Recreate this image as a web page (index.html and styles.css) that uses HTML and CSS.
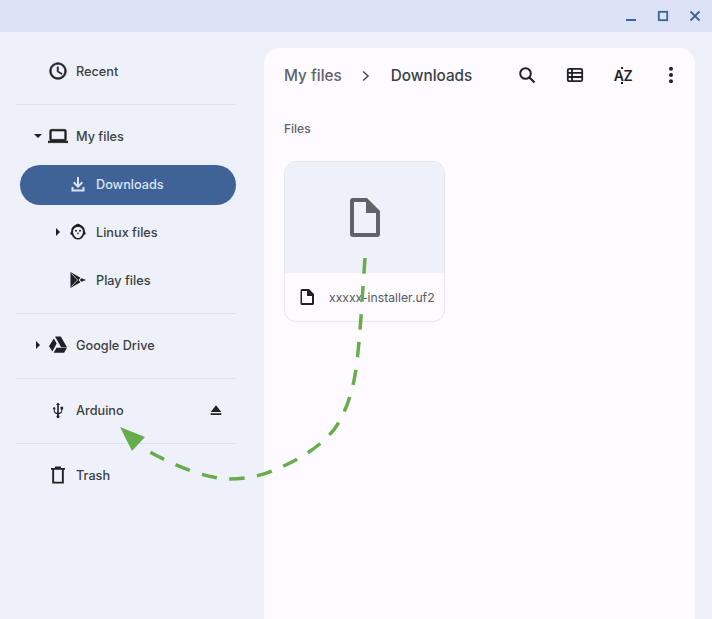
FILE: index.html
```html
<!DOCTYPE html>
<html lang="en">
<head>
  <meta charset="UTF-8" />
  <title>Files - Downloads</title>
  <link rel="stylesheet" href="styles.css">
</head>
<body>

  <div class="titlebar">
    <div class="win-btn"><svg width="16" height="16" viewBox="0 0 16 16"><rect x="3" y="11" width="10" height="2" fill="#3f6397"/></svg></div>
    <div class="win-btn"><svg width="16" height="16" viewBox="0 0 16 16"><rect x="3.800" y="3.800" width="8.400" height="8.400" fill="none" stroke="#3f6397" stroke-width="1.800"/></svg></div>
    <div class="win-btn"><svg width="16" height="16" viewBox="0 0 16 16"><path d="M3.500 3.500l9 9M12.500 3.500l-9 9" stroke="#3f6397" stroke-width="1.800" fill="none"/></svg></div>
  </div>

  <div class="app">
    <div class="sidebar">
      <div class="nav-row">
        <span class="caret-slot"></span>
        <svg class="nav-icon bold" viewBox="0 0 24 24"><path d="M11.990 2C6.470 2 2 6.480 2 12s4.470 10 9.990 10C17.520 22 22 17.520 22 12S17.520 2 11.990 2zM12 20c-4.420 0-8-3.580-8-8s3.580-8 8-8 8 3.580 8 8-3.580 8-8 8zm.5-13H11v6l5.250 3.150.75-1.230-4.500-2.670z"/></svg>
        <span class="nav-label">Recent</span>
      </div>
      <div class="divider"></div>

      <div class="nav-row">
        <span class="caret-slot"><span class="caret-down"></span></span>
        <svg class="nav-icon bold" viewBox="0 0 24 24"><path d="M20 18c1.100 0 1.990-.9 1.990-2L22 6c0-1.100-.9-2-2-2H4c-1.100 0-2 .9-2 2v10c0 1.100.9 2 2 2H0v2h24v-2h-4zM4 6h16v10H4V6z"/></svg>
        <span class="nav-label">My files</span>
      </div>
      <div class="nav-row sub active">
        <span class="pill"></span>
        <span class="caret-slot"></span>
        <svg class="nav-icon" viewBox="0 0 20 20"><path d="M9 3h2v7.200l2.600-2.600L15 9l-5 5-5-5 1.400-1.400L9 10.200z"/><path d="M3.500 13h2v2.500h9V13h2v4.500h-13z"/></svg>
        <span class="nav-label">Downloads</span>
      </div>
      <div class="nav-row sub">
        <span class="caret-slot"><span class="caret-right"></span></span>
        <svg class="nav-icon" viewBox="0 0 20 20"><path d="M10 1.800c1 0 1.700.4 2.200 1 2.600.8 4.600 3.200 4.600 6.200 0 1.200.9 1.400.9 2.400 0 .9-.9 1.200-1.600 1.500-.9 2.600-3.200 4.700-6.100 4.700s-5.200-2.100-6.100-4.700c-.7-.3-1.600-.6-1.600-1.500 0-1 .9-1.200.9-2.400 0-3 2-5.400 4.600-6.200.5-.6 1.200-1 2.200-1zM10 5c-2.800 0-4.900 2-4.900 4.700 0 3 2.100 6.300 4.900 6.300s4.900-3.300 4.900-6.300C14.900 7 12.800 5 10 5z"/><circle cx="8" cy="8.800" r="1"/><circle cx="12" cy="8.800" r="1"/><path d="M8.800 10.800h2.400L10 12.400z"/></svg>
        <span class="nav-label">Linux files</span>
      </div>
      <div class="nav-row sub">
        <span class="caret-slot"></span>
        <svg class="nav-icon" viewBox="0 0 20 20"><path d="M2.500 2l10 5.700-2 2.300 2 2.300-10 5.700z"/><path d="M13.500 8.200L18 10l-4.500 1.800L11.800 10z"/><path d="M3.500 3.500L9.600 10l-6.100 6.500" fill="none" stroke="#eff1fa" stroke-width=".7"/></svg>
        <span class="nav-label">Play files</span>
      </div>
      <div class="divider"></div>

      <div class="nav-row">
        <span class="caret-slot"><span class="caret-right"></span></span>
        <svg class="nav-icon" viewBox="0 0 20 20"><path d="M7 1.500h5.800l6.200 10.800h-5.800zM5.800 3.500l2.900 5-4.300 8L1 11.200zM8.500 12.800h10.500l-2.900 5H5.600z"/></svg>
        <span class="nav-label">Google Drive</span>
      </div>
      <div class="divider"></div>

      <div class="nav-row">
        <span class="caret-slot"></span>
        <svg class="nav-icon" viewBox="0 0 20 20"><path d="M10 2.500l2 2.500h-1.200v7.800c1.500-.2 2.500-.8 2.500-2V9.500h-.8V6.800h2.600v2.700h-.8v1.300c0 2-1.600 3.200-3.500 3.400v1.100a1.500 1.500 0 1 1-1.600 0v-1.100c-1.900-.2-3.500-1.400-3.500-3.400V9.500a1.200 1.200 0 1 1 1 0v1.300c0 1.200 1 1.800 2.500 2V5H8z"/></svg>
        <span class="nav-label">Arduino</span>
        <svg class="eject" viewBox="0 0 24 24"><path d="M4 17h16v2.500H4zM12 5l-8 10h16z"/></svg>
      </div>
      <div class="divider"></div>

      <div class="nav-row">
        <span class="caret-slot"></span>
        <svg class="nav-icon" viewBox="0 0 20 20"><path d="M7 1.500h6V3h4v1.800h-1.200V18.500H4.200V4.800H3V3h4zM6.100 4.800v11.900h7.800V4.800z"/></svg>
        <span class="nav-label">Trash</span>
      </div>
    </div>

    <div class="main">
      <div class="header">
        <div class="crumbs">
          <span class="crumb">My files</span>
          <svg class="chevron" width="10" height="12" viewBox="0 0 10 12"><path d="M2.200 1.500L7 6l-4.800 4.500" fill="none" stroke="#4a4d52" stroke-width="1.500"/></svg>
          <span class="crumb current">Downloads</span>
        </div>
        <div class="tools">
          <div class="tool"><svg width="20" height="20" viewBox="0 0 20 20"><circle cx="8.500" cy="8.500" r="5.300" fill="none" stroke="#202124" stroke-width="2"/><path d="M12.500 12.500l5 5" stroke="#202124" stroke-width="2.200"/></svg></div>
          <div class="tool"><svg width="20" height="20" viewBox="0 0 20 20"><rect x="2.800" y="3.800" width="14.400" height="12.400" rx="1.500" fill="none" stroke="#202124" stroke-width="1.800"/><path d="M2.800 7.900h14.400M2.800 12h14.400M7 3.800v12.400" stroke="#202124" stroke-width="1.800"/></svg></div>
          <div class="tool"><span class="sort-az">AZ</span></div>
          <div class="tool"><svg width="20" height="20" viewBox="0 0 20 20" fill="#202124"><circle cx="10" cy="3.800" r="2"/><circle cx="10" cy="10" r="2"/><circle cx="10" cy="16.200" r="2"/></svg></div>
        </div>
      </div>

      <div class="section-title">Files</div>

      <div class="file-card">
        <div class="thumb">
          <svg width="30" height="39" viewBox="0 0 30 39"><path d="M3 0h14l13 13v23a3 3 0 0 1-3 3H3a3 3 0 0 1-3-3V3a3 3 0 0 1 3-3z" fill="#5f6368"/><path d="M4 4h12v11h10v20H4z" fill="#eff1fa"/></svg>
        </div>
        <div class="file-info">
          <svg class="file-icon" width="14" height="16" viewBox="0 0 14 16"><path d="M2.500 0h6.500l5 5v9.500a1.500 1.500 0 0 1-1.500 1.500h-10.500a1.500 1.500 0 0 1-1.500-1.500v-13a1.500 1.500 0 0 1 1.500-1.500z" fill="#202124"/><path d="M2 2h5v5h5v7H2z" fill="#fdfbff"/></svg>
          <span class="file-name">xxxxx-installer.uf2</span>
        </div>
      </div>
    </div>
  </div>

  <!-- hand drawn annotation over the window -->
  <svg class="annotation" width="712" height="619" viewBox="0 0 712 619">
    <path d="M365 258C362 300 360 340 356 369C353 390 347 408 339 422C325 447 290 464 272 471C255 478 240 479 228 479C205 478 175 466 150 452" fill="none" stroke="#68ad4b" stroke-width="3.500" stroke-dasharray="15.500 12.500"/>
    <path d="M120 427L145 437L132 451z" fill="#68ad4b"/>
  </svg>

</body>
</html>
```

FILE: styles.css
```css
* { box-sizing: border-box; }
body, html {
  margin: 0; padding: 0; height: 100vh;
  font-family: Inter, "Liberation Sans", sans-serif;
  background: #eff1fa;
  overflow: hidden;
}
.titlebar {
  height: 32px;
  background: #dce3f6;
  display: flex;
  justify-content: flex-end;
  align-items: center;
  padding-right: 1px;
}
.win-btn {
  width: 32px;
  height: 32px;
  display: flex;
  align-items: center;
  justify-content: center;
}
.app {
  display: flex;
  height: calc(100vh - 32px);
}
.sidebar {
  width: 264px;
  flex: none;
  padding-top: 15px;
}
.nav-row {
  position: relative;
  height: 48px;
  display: flex;
  align-items: center;
  padding-left: 28px;
  padding-right: 40px;
  color: #3c4043;
}
.nav-row.sub { padding-left: 48px; }
.caret-slot {
  width: 20px;
  flex: none;
  display: flex;
  justify-content: center;
}
.caret-down {
  border-left: 4px solid transparent;
  border-right: 4px solid transparent;
  border-top: 4px solid #202124;
}
.caret-right {
  border-top: 4px solid transparent;
  border-bottom: 4px solid transparent;
  border-left: 4px solid #202124;
}
.nav-icon {
  width: 20px;
  height: 20px;
  flex: none;
  fill: #202124;
}
.nav-icon.bold {
  stroke: #202124;
  stroke-width: 0.7;
}
.nav-label {
  position: relative;
  margin-left: 8px;
  font-size: 12.7px;
  font-weight: 500;
}
.eject {
  width: 16px;
  height: 16px;
  margin-left: auto;
  fill: #202124;
}
.pill {
  position: absolute;
  left: 20px;
  right: 28px;
  top: 5px;
  height: 40px;
  border-radius: 20px;
  background: #3f6397;
}
.active { color: #dce3f6; }
.active .nav-icon {
  position: relative;
  fill: #dce3f6;
}
.divider {
  height: 1px;
  margin: 9px 28px 7px 16px;
  background: #e0e1ea;
}
.main {
  flex: 1;
  margin: 16px 17px 0 0;
  background: #fdfbff;
  border-radius: 16px 16px 0 0;
  padding-left: 20px;
}
.header {
  height: 54px;
  display: flex;
  align-items: center;
}
.crumbs {
  display: flex;
  align-items: center;
}
.crumb {
  font-size: 15.3px;
  font-weight: 500;
  color: #5f6368;
}
.crumb.current { color: #3c4043; }
.chevron { margin: 1px 20px 0 19px; }
.tools {
  margin-left: auto;
  display: flex;
}
.tool {
  width: 48px;
  height: 48px;
  display: flex;
  align-items: center;
  justify-content: center;
}
.sort-az {
  position: relative;
  font-size: 14px;
  font-weight: 600;
  letter-spacing: -0.5px;
  color: #202124;
}
.sort-az::before, .sort-az::after {
  content: "";
  position: absolute;
  left: 7px;
  width: 2px;
  height: 2px;
  background: #202124;
}
.sort-az::before { top: 0; }
.sort-az::after { bottom: 0; }
.section-title {
  margin-top: 19px;
  font-size: 12px;
  font-weight: 500;
  color: #5f6368;
}
.file-card {
  margin-top: 25px;
  width: 161px;
  height: 161px;
  border: 1px solid #e6e6ec;
  border-radius: 12px;
  overflow: hidden;
}
.thumb {
  height: 111px;
  background: #eff1fa;
  display: flex;
  align-items: center;
  justify-content: center;
}
.file-info {
  height: 48px;
  display: flex;
  align-items: center;
  padding-left: 15px;
}
.file-name {
  margin-left: 15px;
  font-size: 12.2px;
  color: #55585d;
  white-space: nowrap;
}
.annotation {
  position: absolute;
  top: 0;
  left: 0;
  pointer-events: none;
}
```
